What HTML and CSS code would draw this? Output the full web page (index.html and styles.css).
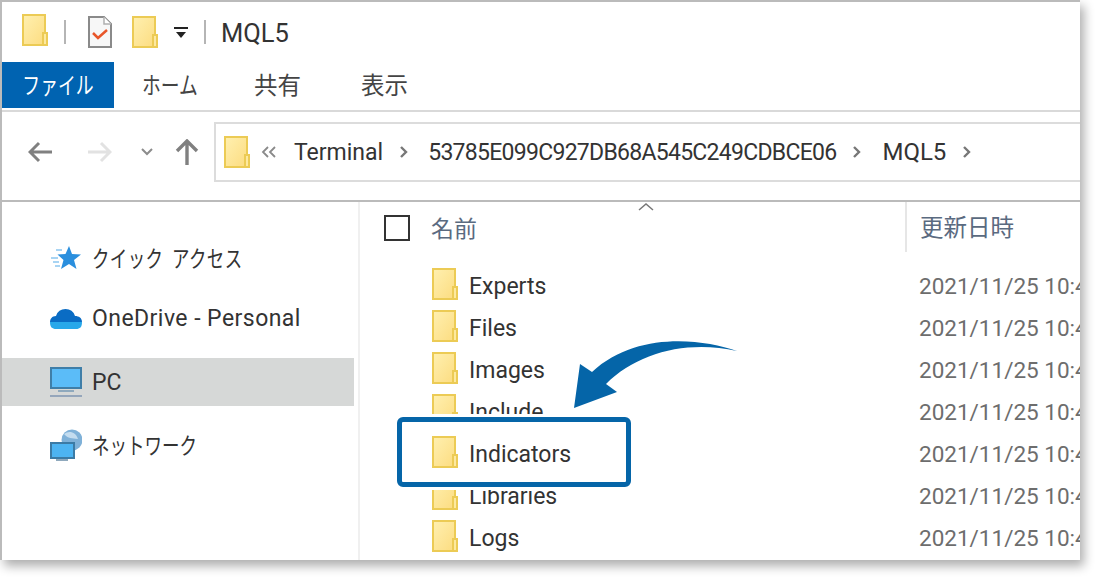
FILE: index.html
```html
<!DOCTYPE html>
<html lang="ja">
<head>
<meta charset="utf-8">
<title>MQL5</title>
<link rel="stylesheet" href="styles.css">
</head>
<body>
<svg class="defs" width="0" height="0" aria-hidden="true">
  <defs>
    <linearGradient id="fg" x1="0" y1="0" x2="1" y2="1">
      <stop offset="0" stop-color="#fff0b0"/>
      <stop offset="1" stop-color="#fcdc80"/>
    </linearGradient>
    <symbol id="folder" viewBox="0 0 26 32">
      <rect x="1" y="1" width="22" height="30" fill="url(#fg)" stroke="#eccb55" stroke-width="2"/>
      <path d="M21 19h4v12h-4z" fill="#fde9a0" stroke="#eccb55" stroke-width="2"/>
    </symbol>
  </defs>
</svg>
<div class="window">
  <header class="titlebar">
    <svg class="folder folder-a"><use href="#folder"/></svg>
    <span class="sep sep-a"></span>
    <svg class="doc" viewBox="0 0 24 32">
      <path d="M1 1h15l7 7v23H1z" fill="#f7f7f7" stroke="#8a8a8a" stroke-width="2"/>
      <path d="M16 1v7h7" fill="#fff" stroke="#b0b0b0" stroke-width="1.5"/>
      <path d="M5 17l5 5 9-8" fill="none" stroke="#e8562a" stroke-width="2.500"/>
    </svg>
    <svg class="folder folder-b"><use href="#folder"/></svg>
    <svg class="dropdown" viewBox="0 0 14 12">
      <path d="M0 1h14v2H0z" fill="#222"/>
      <path d="M2 6h10l-5 6z" fill="#222"/>
    </svg>
    <span class="sep sep-b"></span>
    <span class="title">MQL5</span>
  </header>
  <nav class="tabs">
    <span class="tab tab-file"><span class="kana kana-center">ファイル</span></span>
    <span class="tab tab-home"><span class="kana kana-home">ホーム</span></span>
    <span class="tab tab-share">共有</span>
    <span class="tab tab-view">表示</span>
  </nav>
  <div class="addressrow">
    <svg class="navicon nav-back" viewBox="0 0 24 22"><path d="M11 2L2 11l9 9M2 11h22" fill="none" stroke="#808080" stroke-width="3"/></svg>
    <svg class="navicon nav-fwd" viewBox="0 0 24 22"><path d="M13 2l9 9-9 9M22 11H0" fill="none" stroke="#e2e2e2" stroke-width="3"/></svg>
    <svg class="nav-down" viewBox="0 0 12 8"><path d="M1 1l5 5 5-5" fill="none" stroke="#8c8c8c" stroke-width="2"/></svg>
    <svg class="navicon nav-up" viewBox="0 0 24 26"><path d="M2 12l10-10 10 10M12 2v24" fill="none" stroke="#808080" stroke-width="3.400"/></svg>
    <div class="addressbox">
      <svg class="folder"><use href="#folder"/></svg>
      <svg class="crumb-dbl" viewBox="0 0 16 12"><path d="M7 1L2 6l5 5M14 1L9 6l5 5" fill="none" stroke="#8a8a8a" stroke-width="1.800"/></svg>
      <span class="crumb crumb-terminal">Terminal</span>
      <svg class="crumb-sep" viewBox="0 0 10 14"><path d="M2 2l5 5-5 5" fill="none" stroke="#777" stroke-width="2.400"/></svg>
      <span class="crumb crumb-id">53785E099C927DB68A545C249CDBCE06</span>
      <svg class="crumb-sep" viewBox="0 0 10 14"><path d="M2 2l5 5-5 5" fill="none" stroke="#777" stroke-width="2.400"/></svg>
      <span class="crumb crumb-mql">MQL5</span>
      <svg class="crumb-sep" viewBox="0 0 10 14"><path d="M2 2l5 5-5 5" fill="none" stroke="#777" stroke-width="2.400"/></svg>
    </div>
  </div>
  <div class="main">
    <aside class="sidebar">
      <div class="navitem navitem-quick">
        <svg class="navglyph" viewBox="0 0 32 26">
          <path d="M19 1l3 8 9 .5-7 5.500 2.500 9L19 19l-8 5 2.500-9-6-5.500 8-.5z" fill="#2a8fde"/>
          <path d="M1 13h7M3 17h6M5 21h5M6 5h6" stroke="#8cc6f0" stroke-width="1.500"/>
        </svg>
        <span class="kana kana-quick">クイック アクセス</span>
      </div>
      <div class="navitem">
        <svg class="navglyph" viewBox="0 0 32 24">
          <path d="M6 10a10 10 0 0 1 19 0c4 0 7 2 7 6H0c0-3 2-6 6-6z" fill="#0a6cc4"/>
          <path d="M0 16h32c0 5-2 7-6 7H6c-4 0-6-2-6-7z" fill="#28a8ea"/>
        </svg>
        <span class="nav-wide">OneDrive - Personal</span>
      </div>
      <div class="navitem navitem-selected">
        <svg class="navglyph" viewBox="0 0 32 30">
          <rect x="1" y="1" width="30" height="20" fill="#5bbcf8" stroke="#3f7ea8" stroke-width="2"/>
          <path d="M8 23h16v2H8z" fill="#8fa9bd"/>
          <path d="M0 28h32v2H0z" fill="#95a6bb"/>
        </svg>
        <span>PC</span>
      </div>
      <div class="navitem">
        <svg class="navglyph navglyph-tall" viewBox="0 0 32 32">
          <circle cx="22" cy="11" r="10.500" fill="#7fb1d8"/>
          <path d="M14 5c5-4 12-2 14 5-6-1-10 0-14-5z" fill="#c3dcef"/>
          <rect x="1" y="14" width="23" height="15" fill="#4db4f2" stroke="#3c7ba5" stroke-width="2"/>
          <path d="M6 30h12v2H6z" fill="#8fa9bd"/>
        </svg>
        <span class="kana kana-net">ネットワーク</span>
      </div>
    </aside>
    <section class="content">
      <div class="colhead">
        <span class="check"></span>
        <span class="col-name">名前</span>
        <svg class="sort" viewBox="0 0 16 8"><path d="M1 7l7-6 7 6" fill="none" stroke="#777" stroke-width="1.500"/></svg>
        <span class="col-date">更新日時</span>
      </div>
      <div class="rows">
        <div class="row"><svg class="folder"><use href="#folder"/></svg><span class="fname">Experts</span><span class="fdate">2021/11/25 10:44</span></div>
        <div class="row"><svg class="folder"><use href="#folder"/></svg><span class="fname">Files</span><span class="fdate">2021/11/25 10:44</span></div>
        <div class="row"><svg class="folder"><use href="#folder"/></svg><span class="fname">Images</span><span class="fdate">2021/11/25 10:44</span></div>
        <div class="row"><svg class="folder"><use href="#folder"/></svg><span class="fname">Include</span><span class="fdate">2021/11/25 10:44</span></div>
        <div class="row row-framed"><span class="fdate">2021/11/25 10:44</span></div>
        <div class="row"><svg class="folder"><use href="#folder"/></svg><span class="fname">Libraries</span><span class="fdate">2021/11/25 10:44</span></div>
        <div class="row"><svg class="folder"><use href="#folder"/></svg><span class="fname">Logs</span><span class="fdate">2021/11/25 10:44</span></div>
      </div>
    </section>
  </div>
  <div class="highlight"><svg class="folder"><use href="#folder"/></svg><span class="fname">Indicators</span></div>
  <svg class="arrow" viewBox="0 0 170 80">
    <path d="M167 15C130 2 65 -4 22 36L10 28 4 72 47 56 36 48C68 16 118 4 167 15Z" fill="#0565a8"/>
  </svg>
</div>
</body>
</html>
```
FILE: styles.css
```css
* { box-sizing: border-box; }
html, body { margin: 0; padding: 0; background: #fff; overflow: hidden; }
body {
  width: 1100px;
  height: 580px;
  font-family: Roboto, "Noto Sans CJK JP", sans-serif;
  color: #222;
}
.defs { position: absolute; }
.window {
  position: relative;
  width: 1080px;
  height: 560px;
  border-top: 2px solid #bbb;
  border-left: 2px solid #bbb;
  background: #fff;
  box-shadow: 4px 6px 10px rgba(0,0,0,.32);
  display: flex;
  flex-direction: column;
}
.folder { width: 26px; height: 32px; flex: none; display: block; }
.kana { display: inline-block; transform: scaleX(.76); transform-origin: left center; white-space: nowrap; }
.kana-center { transform-origin: center; }
.kana-home { transform: scaleX(.8); }
.kana-quick { word-spacing: 5px; letter-spacing: .5px; padding-bottom: 2px; }
.kana-net { padding-bottom: 2px; }

.titlebar {
  height: 60px;
  display: flex;
  align-items: center;
  padding: 0 0 0 20px;
  flex: none;
}
.folder-a { margin-bottom: 4px; }
.sep { width: 2px; height: 24px; background: #b5b5b5; flex: none; }
.sep-a { margin: 0 0 0 16px; }
.doc { width: 24px; height: 32px; margin-left: 22px; flex: none; }
.folder-b { margin-left: 20px; }
.dropdown { width: 14px; height: 12px; margin-left: 16px; flex: none; }
.sep-b { margin-left: 16px; }
.title { margin-left: 15px; padding-top: 2px; font-size: 25.500px; color: #333; }

.tabs { height: 46px; display: flex; align-items: stretch; flex: none; }
.tab { display: flex; align-items: center; font-size: 23.500px; color: #444; padding-bottom: 2px; }
.tab-file { width: 112px; justify-content: center; background: #0063b1; color: #fff; }
.tab-home { margin-left: 28px; width: 69px; }
.tab-share { margin-left: 43px; }
.tab-view { margin-left: 60px; }

.addressrow {
  flex: none;
  height: 92px;
  margin-top: 2px;
  border-top: 2px solid #d9d9d9;
  border-bottom: 2px solid #bbb;
  display: flex;
  align-items: center;
  padding: 0 0 8px 26px;
}
.navicon { display: block; flex: none; }
.nav-back { width: 24px; height: 22px; }
.nav-fwd { width: 24px; height: 22px; margin-left: 36px; }
.nav-down { width: 12px; height: 8px; margin-left: 29px; flex: none; }
.nav-up { width: 24px; height: 26px; margin-left: 22px; }
.addressbox {
  margin-left: 15px;
  flex: 1;
  height: 60px;
  border: 2px solid #dcdcdc;
  border-right: 0;
  display: flex;
  align-items: center;
  padding-left: 8px;
  font-size: 23px;
  color: #333;
}
.crumb-dbl { width: 16px; height: 12px; margin-left: 11px; flex: none; }
.crumb-terminal { margin-left: 17px; }
.crumb-sep { width: 10px; height: 14px; margin-left: 16px; flex: none; }
.crumb { white-space: nowrap; }
.crumb-id { margin-left: 19px; letter-spacing: -.72px; }
.crumb-mql { margin-left: 20px; font-size: 24px; }

.main { flex: 1; display: flex; min-height: 0; overflow: hidden; }
.sidebar {
  width: 358px;
  flex: none;
  border-right: 2px solid #f0f0f0;
  padding-top: 32px;
}
.navitem {
  height: 48px;
  width: 352px;
  margin-bottom: 16px;
  display: flex;
  align-items: center;
  padding-left: 48px;
  font-size: 23px;
  color: #333;
}
.navitem-quick { margin-bottom: 12px; }
.navitem-selected { margin-bottom: 15px; background: #d6d8d7; }
.navitem span { margin-left: 10px; white-space: nowrap; }
.nav-wide { letter-spacing: .45px; }
.navglyph { width: 32px; height: 30px; flex: none; }
.navglyph-tall { height: 32px; }

.content { flex: 1; min-width: 0; overflow: hidden; }
.colhead { height: 52px; display: flex; align-items: center; position: relative; padding-left: 24px; }
.check { width: 26px; height: 26px; border: 2px solid #333; flex: none; }
.col-name { margin-left: 21px; padding-bottom: 3px; font-size: 23px; color: #5a6a80; }
.sort { position: absolute; left: 278px; top: 1px; width: 16px; height: 8px; }
.col-date {
  position: absolute;
  left: 545px;
  top: 0;
  height: 50px;
  border-left: 2px solid #e6e6e6;
  padding: 0 0 2px 13px;
  display: flex;
  align-items: center;
  font-size: 23.500px;
  color: #5a6a80;
}
.rows { padding-top: 9px; }
.row { height: 42px; display: flex; align-items: center; padding-left: 72px; white-space: nowrap; font-size: 23px; }
.row-framed { padding-left: 559px; }
.fname { margin-left: 11px; padding-top: 4px; color: #333; width: 450px; flex: none; }
.fdate { color: #6d6d6d; font-size: 22.500px; padding-top: 4px; overflow: hidden; }

.highlight {
  position: absolute;
  left: 395px;
  top: 415px;
  width: 234px;
  height: 70px;
  border: 5px solid #0565a8;
  border-radius: 6px;
  background: #fff;
  box-shadow: 0 0 0 3px #fff;
  display: flex;
  align-items: center;
  padding-left: 30px;
  font-size: 23px;
}
.highlight .fname { width: auto; padding-top: 5px; }
.arrow { position: absolute; left: 568px; top: 334px; width: 170px; height: 80px; }
```
